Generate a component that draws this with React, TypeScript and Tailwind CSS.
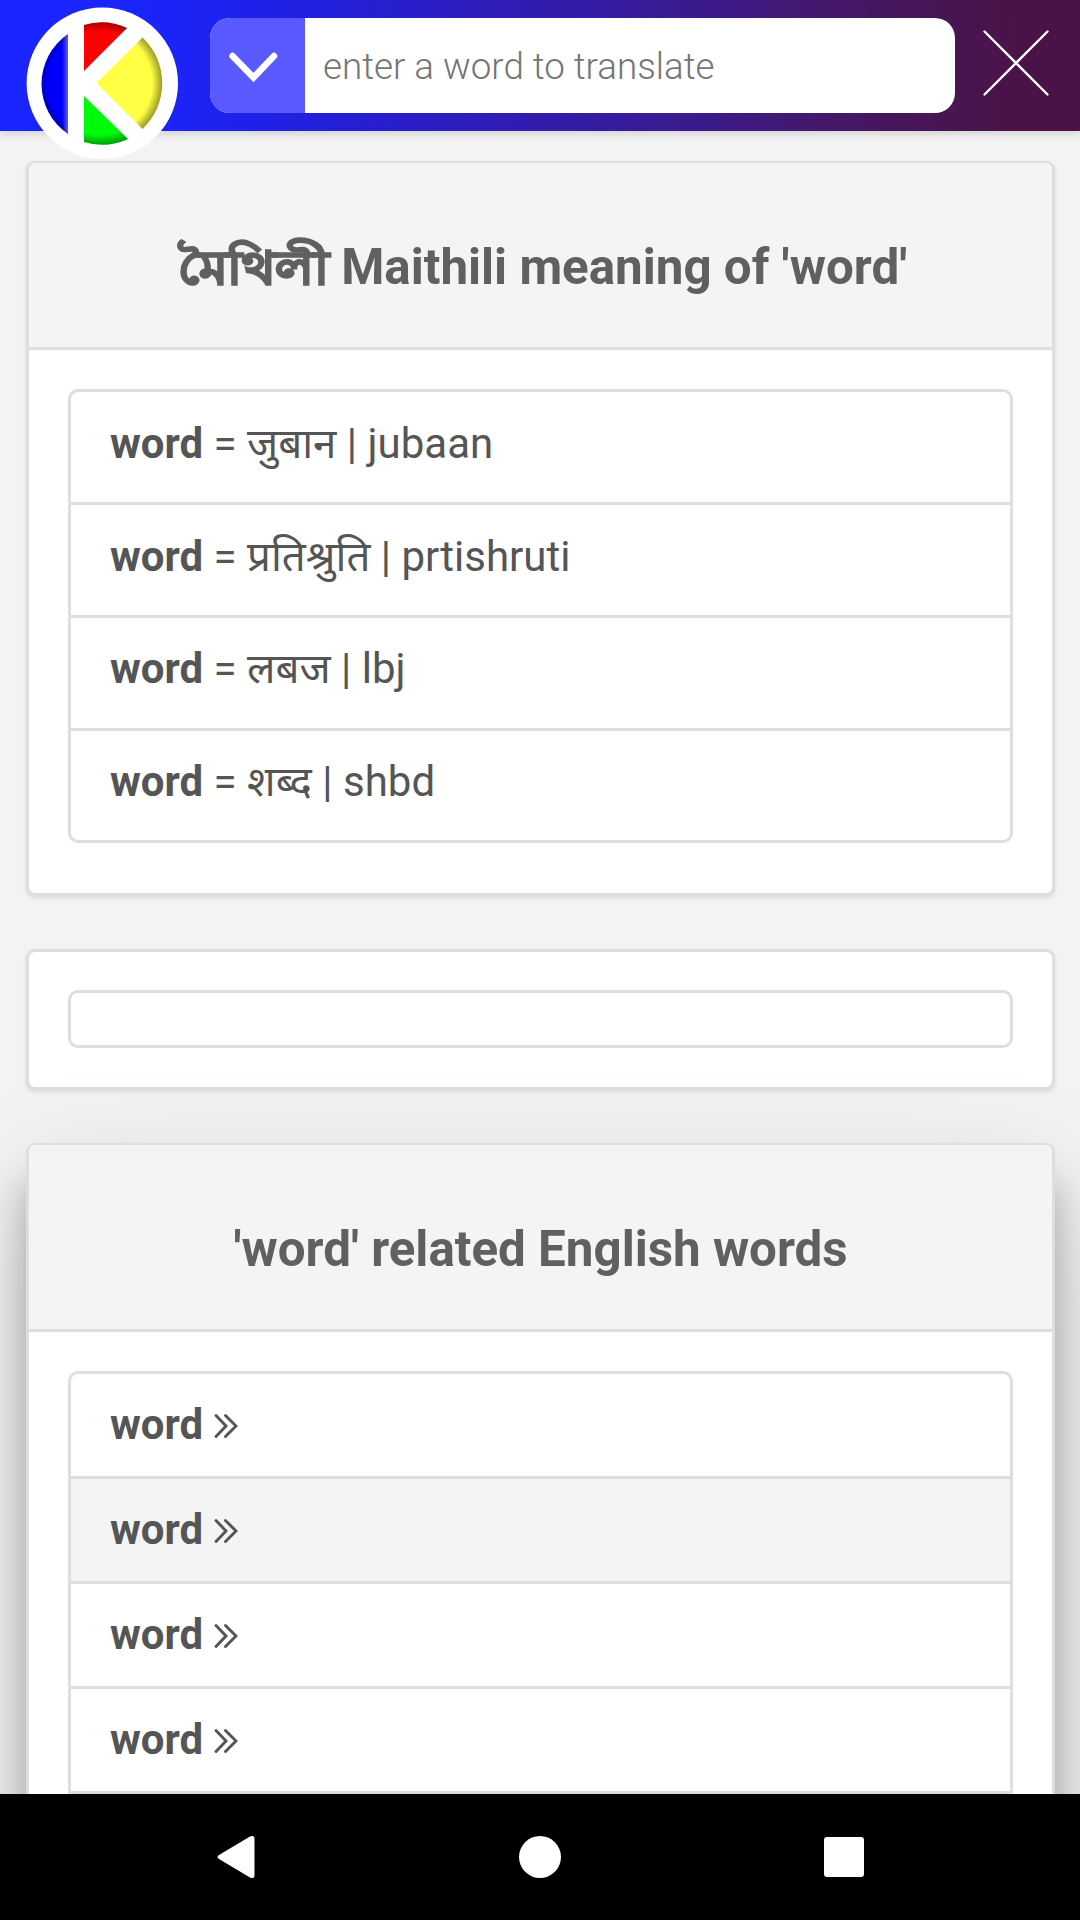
import React from "react";

const meanings = [
  ["जुबान", "jubaan"],
  ["प्रतिश्रुति", "prtishruti"],
  ["लबज", "lbj"],
  ["शब्द", "shbd"],
];

const related = ["word", "word", "word", "word"];

function Logo() {
  return (
    <svg className="absolute left-[26px] top-[7px]" width="153" height="153" viewBox="0 0 153 153">
      <defs>
        <radialGradient id="rim" gradientUnits="userSpaceOnUse" cx="74" cy="76" r="62">
          <stop offset="0.84" stopColor="#000" stopOpacity="0" />
          <stop offset="1" stopColor="#000" stopOpacity="0.38" />
        </radialGradient>
        <linearGradient id="edge" gradientUnits="userSpaceOnUse" x1="36" y1="0" x2="42" y2="0">
          <stop offset="0" stopColor="#fff" stopOpacity="0" />
          <stop offset="1" stopColor="#fff" stopOpacity="0.35" />
        </linearGradient>
      </defs>
      <circle cx="76.3" cy="76.3" r="75.7" fill="#fff" />
      <path d="M42 27V127A60.5 60.5 0 0 1 42 27Z" fill="#0000fb" />
      <path d="M42 27V127A60.5 60.5 0 0 1 42 27Z" fill="url(#rim)" />
      <path d="M36 32L42 27V127L36 122Z" fill="url(#edge)" />
      <path d="M58 18A62 62 0 0 1 101 21L58 64Z" fill="#fd0000" />
      <path d="M58 18A62 62 0 0 1 101 21L58 64Z" fill="url(#rim)" />
      <path d="M58 89L102 132A62 62 0 0 1 58 135Z" fill="#00fa0b" />
      <path d="M58 89L102 132A62 62 0 0 1 58 135Z" fill="url(#rim)" />
      <path d="M70.500 76L116.500 30.500A63 63 0 0 1 116.500 122Z" fill="#ffff43" />
      <path d="M70.500 76L116.500 30.500A63 63 0 0 1 116.500 122Z" fill="url(#rim)" />
    </svg>
  );
}

function Header() {
  return (
    <header className="relative z-10 flex h-[131px] shrink-0 bg-[linear-gradient(92deg,#1a25ff_0%,#1a24fb_14%,#1f21e6_25%,#2c1dc0_42%,#3a1b90_63%,#47165c_82%,#4a1348_94%,#4a1346_100%)] pl-[210px] pt-[18px] shadow-[0_3px_8px_rgba(0,0,0,0.14)]">
      <Logo />
      <div className="flex h-[95px] w-[745px] overflow-hidden rounded-[20px] bg-white">
        <button className="h-full w-[95px] bg-[#5a58ff]" aria-label="Choose language">
          <svg width="95" height="95" viewBox="0 0 95 95" fill="none" stroke="#fff" strokeWidth="6.500" strokeLinecap="round">
            <path d="M22.500 38L43.500 59.500L64 38" />
          </svg>
        </button>
        <div className="flex items-center pl-[18px] pt-[2px] text-[36.750px] font-light text-[#757575]">
          <span className="whitespace-nowrap">enter a word to translate</span>
        </div>
      </div>
      <svg className="ml-[27px] mt-[11px]" width="70" height="70" viewBox="0 0 70 70" stroke="#fff" strokeWidth="2.300" strokeLinecap="round">
        <path d="M2.500 2.500L65.500 65.500M65.500 2.500L2.500 65.500" />
      </svg>
    </header>
  );
}

function CardTitle({ children }: { children: React.ReactNode }) {
  return (
    <h2 className="flex h-[187px] items-center justify-center whitespace-pre border-b-3 border-[#dedede] bg-[#f4f4f4] pt-[25px] text-[49.300px] font-bold text-[#606060]">
      {children}
    </h2>
  );
}

export default function App() {
  return (
    <div className="flex h-[1920px] w-[1080px] flex-col overflow-hidden bg-[#f3f3f3] font-['Roboto','Noto_Sans',sans-serif] text-[42px] text-[#555]">
      <Header />
      <main className="flex min-h-0 flex-1 flex-col overflow-hidden pl-[26px] pr-[25px] pt-[30px]">
        <section className="h-[735px] shrink-0 overflow-hidden rounded-[9px] border-3 border-t-2 border-[#dedede] bg-white shadow-[0_2px_4px_rgba(0,0,0,0.1)]">
          <CardTitle>
            <span className="ml-[11px] inline-block origin-right translate-y-px scale-x-[1.050] scale-y-[0.930] [-webkit-text-stroke:2px_#606060]">মৈথিলী</span>
            <span> Maithili meaning of 'word'</span>
          </CardTitle>
          <ul className="mx-[39px] mt-[39px] h-[454px] rounded-[10px] border-3 border-[#dedede]">
            {meanings.map(([native, latin]) => (
              <li key={latin} className="flex h-[113px] items-center border-b-3 border-[#dedede] pb-[7px] pl-[39px] last:border-b-0 last:pb-[13px] nth-3:pb-[9px]">
                <span className="whitespace-pre">
                  <b>word</b> = {native} | {latin}
                </span>
              </li>
            ))}
          </ul>
        </section>
        <section className="mt-[53px] h-[141px] shrink-0 rounded-[9px] border-3 border-[#dedede] bg-white px-[39px] pt-[38px] shadow-[0_2px_4px_rgba(0,0,0,0.1)]">
          <div className="h-[58px] rounded-[10px] border-3 border-[#dedede]" />
        </section>
        <section className="mt-[53px] h-[900px] shrink-0 overflow-hidden rounded-[9px] border-3 border-t-2 border-[#dedede] bg-white shadow-[0_40px_36px_rgba(0,0,0,0.26),0_45px_120px_rgba(0,0,0,0.17)]">
          <CardTitle>'word' related English words</CardTitle>
          <ul className="mx-[39px] mt-[39px] rounded-t-[10px] border-3 border-[#dedede]">
            {related.map((w, i) => (
              <li key={i} className="flex h-[105px] items-center border-b-3 border-[#dedede] pb-[2px] pl-[39px] nth-2:bg-[#f4f4f4]">
                <b>{w}</b>
                <svg className="ml-[11px] mt-[3px]" width="24" height="26" viewBox="0 0 24 26" fill="none" stroke="#555" strokeWidth="2.900" strokeLinecap="round">
                  <path d="M2 2.500L12 13L2 23.500M11.500 2.500L22 13L11.500 23.500" />
                </svg>
              </li>
            ))}
          </ul>
        </section>
      </main>
      <nav className="relative flex h-[126px] shrink-0 items-center justify-between bg-black pl-[217px] pr-[216px]">
        <svg width="38" height="44" viewBox="0 0 38 44" fill="#fff">
          <path d="M33 1.500Q37.500-.5 37.500 4V40Q37.500 44.500 33 42.500L2 24Q-1 22 2 20Z" />
        </svg>
        <span className="size-[42px] rounded-full bg-white" />
        <span className="size-[40px] rounded-[3px] bg-white" />
      </nav>
    </div>
  );
}
